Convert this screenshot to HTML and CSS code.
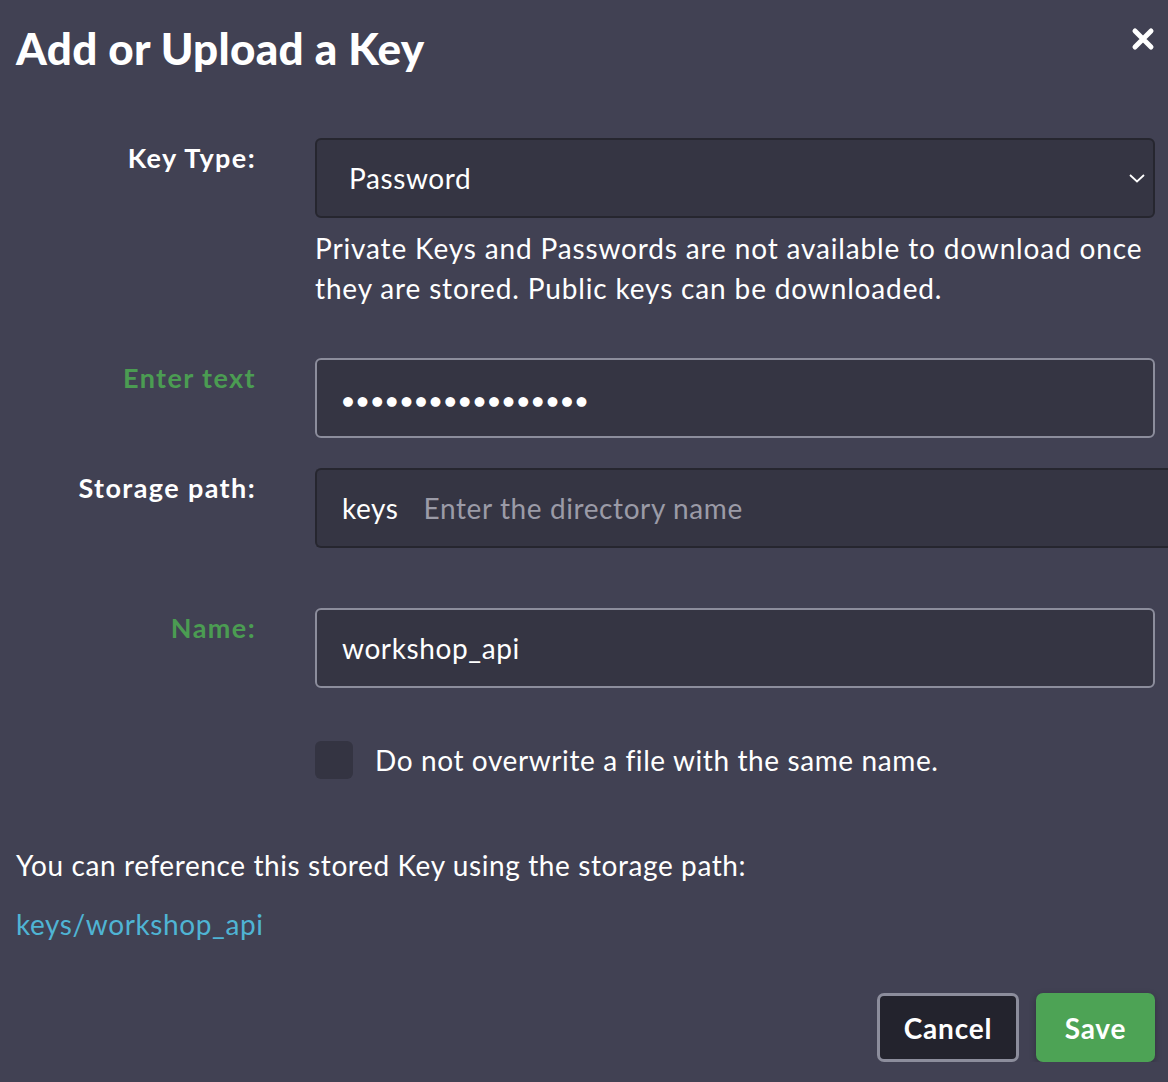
FILE: index.html
```html
<!DOCTYPE html>
<html lang="en">
<head>
    <meta charset="UTF-8">
    <meta name="viewport" content="width=device-width, initial-scale=1.0">
    <title>Add or Upload a Key</title>
    <link rel="stylesheet" href="styles.css">
</head>
<body>
    <div class="modal">
        <div class="modal-header">
            <h1>Add or Upload a Key</h1>
            <button class="close-btn" aria-label="Close">
                <svg width="24" height="24" viewBox="0 0 24 24">
                    <path d="M4 4 L20 20 M20 4 L4 20" stroke="#fff" stroke-width="5" stroke-linecap="round"/>
                </svg>
            </button>
        </div>

        <div class="form-row">
            <label class="form-label" for="keyType">Key Type:</label>
            <div class="form-control">
                <div class="select-box" id="keyType">
                    <span>Password</span>
                    <svg class="chevron" width="16" height="9" viewBox="0 0 16 9">
                        <path d="M1 1 L8 7.5 L15 1" fill="none" stroke="#fff" stroke-width="1.8"/>
                    </svg>
                </div>
                <p class="help-text">Private Keys and Passwords are not available to download once they are stored. Public keys can be downloaded.</p>
            </div>
        </div>

        <div class="form-row row-text">
            <label class="form-label valid" for="keyText">Enter text</label>
            <div class="form-control">
                <div class="input-box bordered">
                    <span class="dots">&#9679;&#9679;&#9679;&#9679;&#9679;&#9679;&#9679;&#9679;&#9679;&#9679;&#9679;&#9679;&#9679;&#9679;&#9679;&#9679;&#9679;</span>
                </div>
            </div>
        </div>

        <div class="form-row row-path">
            <label class="form-label" for="storagePath">Storage path:</label>
            <div class="form-control">
                <div class="input-box path-box">
                    <span class="prefix">keys</span>
                    <span class="placeholder">Enter the directory name</span>
                </div>
            </div>
        </div>

        <div class="form-row row-name">
            <label class="form-label valid" for="keyName">Name:</label>
            <div class="form-control">
                <div class="input-box bordered">
                    <span>workshop_api</span>
                </div>
            </div>
        </div>

        <div class="form-row row-check">
            <div class="form-label"></div>
            <div class="form-control check-line">
                <span class="checkbox"></span>
                <span>Do not overwrite a file with the same name.</span>
            </div>
        </div>

        <p class="ref-text">You can reference this stored Key using the storage path:</p>
        <a class="ref-link" href="#">keys/workshop_api</a>

        <div class="modal-footer">
            <button class="btn btn-cancel">Cancel</button>
            <button class="btn btn-save">Save</button>
        </div>
    </div>
</body>
</html>
```

FILE: styles.css
```css
body {
    margin: 0;
    font-family: 'Lato', 'Open Sans', sans-serif;
    background-color: #414153;
    color: #fff;
    letter-spacing: 0.6px;
    overflow: hidden;
}

.modal {
    padding: 0 13px 0 16px;
}

.modal-header {
    display: flex;
    justify-content: space-between;
    align-items: flex-start;
    height: 138px;
}

h1 {
    margin: 0;
    padding-top: 22px;
    font-size: 44px;
    line-height: 52px;
    font-weight: 900;
    letter-spacing: 0.3px;
}

.close-btn {
    background: none;
    border: none;
    padding: 0;
    margin-top: 27px;
    cursor: pointer;
}

.form-row {
    display: grid;
    grid-template-columns: 239px 1fr;
    column-gap: 60px;
}

.form-label {
    text-align: right;
    font-size: 27px;
    line-height: 40px;
    font-weight: 700;
    letter-spacing: 1.4px;
    margin-right: -1px;
}

.form-label.valid {
    color: #4b9c52;
}

.select-box,
.input-box {
    height: 80px;
    box-sizing: border-box;
    background-color: #353543;
    border-radius: 6px;
    display: flex;
    align-items: center;
    font-size: 28px;
}

.select-box {
    border: 2px solid #26262f;
    padding: 0 8px 0 32px;
    justify-content: space-between;
}

.input-box {
    padding: 0 25px;
}

.bordered {
    border: 2px solid #8c8d9c;
}

.path-box {
    border: 2px solid #26262f;
    border-right: none;
    border-radius: 6px 0 0 6px;
    margin-right: -13px;
}

.prefix {
    margin-right: 25px;
}

.placeholder {
    color: #9b9ba7;
}

.dots {
    font-size: 20px;
    letter-spacing: 2.6px;
    padding-top: 4px;
}

.help-text {
    margin: 10px 0 0;
    font-size: 28px;
    line-height: 40px;
    letter-spacing: 0.85px;
}

.row-text {
    margin-top: 50px;
}

.row-path {
    margin-top: 30px;
}

.row-name {
    margin-top: 60px;
}

.row-check {
    margin-top: 53px;
}

.check-line {
    display: flex;
    align-items: center;
    gap: 22px;
    font-size: 28px;
}

.checkbox {
    width: 38px;
    height: 38px;
    border-radius: 6px;
    background-color: #343442;
}

.ref-text {
    margin: 66px 0 0;
    font-size: 28px;
    line-height: 40px;
}

.ref-link {
    display: block;
    margin-top: 19px;
    font-size: 28px;
    line-height: 40px;
    color: #4fb4d4;
    text-decoration: none;
}

.modal-footer {
    display: flex;
    justify-content: flex-end;
    gap: 17px;
    margin-top: 49px;
}

.btn {
    height: 69px;
    border-radius: 7px;
    font-family: 'Lato', sans-serif;
    font-size: 28px;
    font-weight: 700;
    letter-spacing: 0.8px;
    color: #fff;
    cursor: pointer;
}

.btn-cancel {
    width: 142px;
    background-color: #23232d;
    border: 3px solid #8c8d9c;
}

.btn-save {
    width: 119px;
    background-color: #4da355;
    border: none;
    box-shadow: 0 2px 6px rgba(0, 0, 0, 0.25);
}
```
